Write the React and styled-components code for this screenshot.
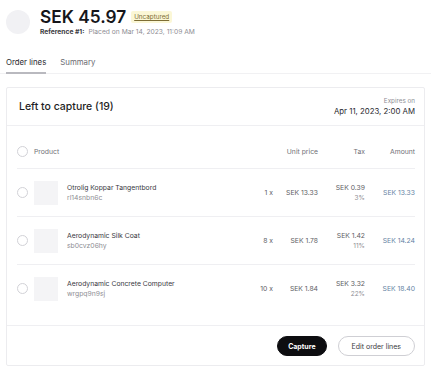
import React from 'react';
import styled, { createGlobalStyle } from 'styled-components';

const GlobalStyle = createGlobalStyle`
  body {
    margin: 0;
    background: #ffffff;
    font-family: Inter, "Liberation Sans", sans-serif;
    color: #1b1b1f;
  }
`;

const Page = styled.div`
  width: 431px;
  padding-top: 7px;
`;

const Header = styled.div`
  display: flex;
  align-items: center;
  gap: 10px;
  padding-left: 6px;
`;

const Avatar = styled.div`
  width: 24px;
  height: 24px;
  border-radius: 50%;
  background: #f1f1f4;
`;

const TitleLine = styled.div`
  display: flex;
  align-items: center;
  gap: 5px;
`;

const Amount = styled.h1`
  margin: 0;
  font-size: 17.3px;
  line-height: 20px;
  font-weight: 600;
  color: #16161a;
`;

const Badge = styled.span`
  font-size: 6.3px;
  padding: 2px 3px;
  background: #fbf7d6;
  color: #7d6d34;
  text-decoration: underline;
  border-radius: 2px;
`;

const Meta = styled.div`
  font-size: 6.7px;
  line-height: 10px;
  color: #8e8e94;

  b {
    color: #3a3a40;
    font-weight: 700;
    margin-right: 4px;
  }
`;

const Tabs = styled.div`
  display: flex;
  gap: 14px;
  margin-top: 20px;
  padding-left: 6px;
  border-bottom: 1px solid #f1f1f3;
`;

const Tab = styled.div`
  font-size: 7.8px;
  padding-bottom: 5px;
  color: ${(p) => (p.$active ? '#2a2a30' : '#6a6a70')};
  border-bottom: 2px solid ${(p) => (p.$active ? '#b9b9bf' : 'transparent')};
  margin-bottom: -1px;
`;

const Card = styled.div`
  margin: 13px 0 0 6px;
  width: 417px;
  border: 1px solid #ececef;
  border-radius: 2px;
`;

const CardHeader = styled.div`
  display: flex;
  justify-content: space-between;
  align-items: center;
  height: 37px;
  padding: 0 9px 0 12px;
  border-bottom: 1px solid #efeff2;
`;

const CardTitle = styled.h2`
  margin: 0;
  font-size: 10.5px;
  font-weight: 500;
  color: #1e1e24;
`;

const Expires = styled.div`
  text-align: right;
  font-size: 7.8px;
  line-height: 10px;
  color: #2a2a30;

  small {
    display: block;
    font-size: 6.3px;
    line-height: 9px;
    color: #8e8e94;
  }
`;

const Table = styled.div`
  padding: 8px 9px 12px 10px;
`;

const Row = styled.div`
  display: grid;
  grid-template-columns: 17px 33px 1fr 40px 45px 47px 50px;
  align-items: center;
  height: ${(p) => (p.$head ? '34px' : '47px')};
  font-size: 6.8px;
  color: #5e5e64;
  border-bottom: 1px solid ${(p) => (p.$last ? 'transparent' : '#efeff2')};
`;

const Check = styled.span`
  width: 9px;
  height: 9px;
  border: 1px solid #d2d2d7;
  border-radius: 50%;
`;

const Thumb = styled.div`
  width: 24px;
  height: 24px;
  background: #f4f4f6;
`;

const HeadLabel = styled.span`
  grid-column: ${(p) => p.$span || 'auto'};
  text-align: ${(p) => (p.$left ? 'left' : 'right')};
  color: #707076;
`;

const Name = styled.div`
  color: #38383e;
  line-height: 10px;

  small {
    display: block;
    font-size: 6.8px;
    color: #8e8e94;
  }
`;

const Cell = styled.div`
  text-align: right;
  color: ${(p) => p.$color || '#5e5e64'};
  line-height: 10px;

  small {
    display: block;
    font-size: 6.5px;
    color: #8e8e94;
  }
`;

const Footer = styled.div`
  display: flex;
  justify-content: flex-end;
  gap: 11px;
  padding: 10px 9px 9px;
  border-top: 1px solid #efeff2;
`;

const Button = styled.button`
  font-family: inherit;
  height: 20px;
  padding: 0 ${(p) => (p.$primary ? '10px' : '13px')};
  border-radius: 10px;
  font-size: 7px;
  font-weight: ${(p) => (p.$primary ? 700 : 400)};
  background: ${(p) => (p.$primary ? '#0d0d10' : '#ffffff')};
  color: ${(p) => (p.$primary ? '#ffffff' : '#3a3a40')};
  border: 1px solid ${(p) => (p.$primary ? '#0d0d10' : '#cfcfd4')};
`;

const lines = [
  { name: 'Otrolig Koppar Tangentbord', sku: 'rl14snbn6c', qty: 1, unit: '13.33', tax: '0.39', rate: '3%', total: '13.33' },
  { name: 'Aerodynamic Silk Coat', sku: 'sb0cvz06hy', qty: 8, unit: '1.78', tax: '1.42', rate: '11%', total: '14.24' },
  { name: 'Aerodynamic Concrete Computer', sku: 'wrgpq9n9sj', qty: 10, unit: '1.84', tax: '3.32', rate: '22%', total: '18.40' },
];

export default function App() {
  return (
    <>
      <GlobalStyle />
      <Page>
        <Header>
          <Avatar />
          <div>
            <TitleLine>
              <Amount>SEK 45.97</Amount>
              <Badge>Uncaptured</Badge>
            </TitleLine>
            <Meta>
              <b>Reference #1:</b>Placed on Mar 14, 2023, 11:09 AM
            </Meta>
          </div>
        </Header>

        <Tabs>
          <Tab $active>Order lines</Tab>
          <Tab>Summary</Tab>
        </Tabs>

        <Card>
          <CardHeader>
            <CardTitle>Left to capture (19)</CardTitle>
            <Expires>
              <small>Expires on</small>
              Apr 11, 2023, 2:00 AM
            </Expires>
          </CardHeader>

          <Table>
            <Row $head>
              <Check />
              <HeadLabel $left $span="2 / 4">Product</HeadLabel>
              <HeadLabel $span="5">Unit price</HeadLabel>
              <HeadLabel>Tax</HeadLabel>
              <HeadLabel>Amount</HeadLabel>
            </Row>
            {lines.map((l, i) => (
              <Row key={l.sku} $last={i === lines.length - 1}>
                <Check />
                <Thumb />
                <Name>
                  {l.name}
                  <small>{l.sku}</small>
                </Name>
                <Cell>{l.qty} x</Cell>
                <Cell>SEK {l.unit}</Cell>
                <Cell>
                  SEK {l.tax}
                  <small>{l.rate}</small>
                </Cell>
                <Cell $color="#6684a4">SEK {l.total}</Cell>
              </Row>
            ))}
          </Table>

          <Footer>
            <Button $primary>Capture</Button>
            <Button>Edit order lines</Button>
          </Footer>
        </Card>
      </Page>
    </>
  );
}
